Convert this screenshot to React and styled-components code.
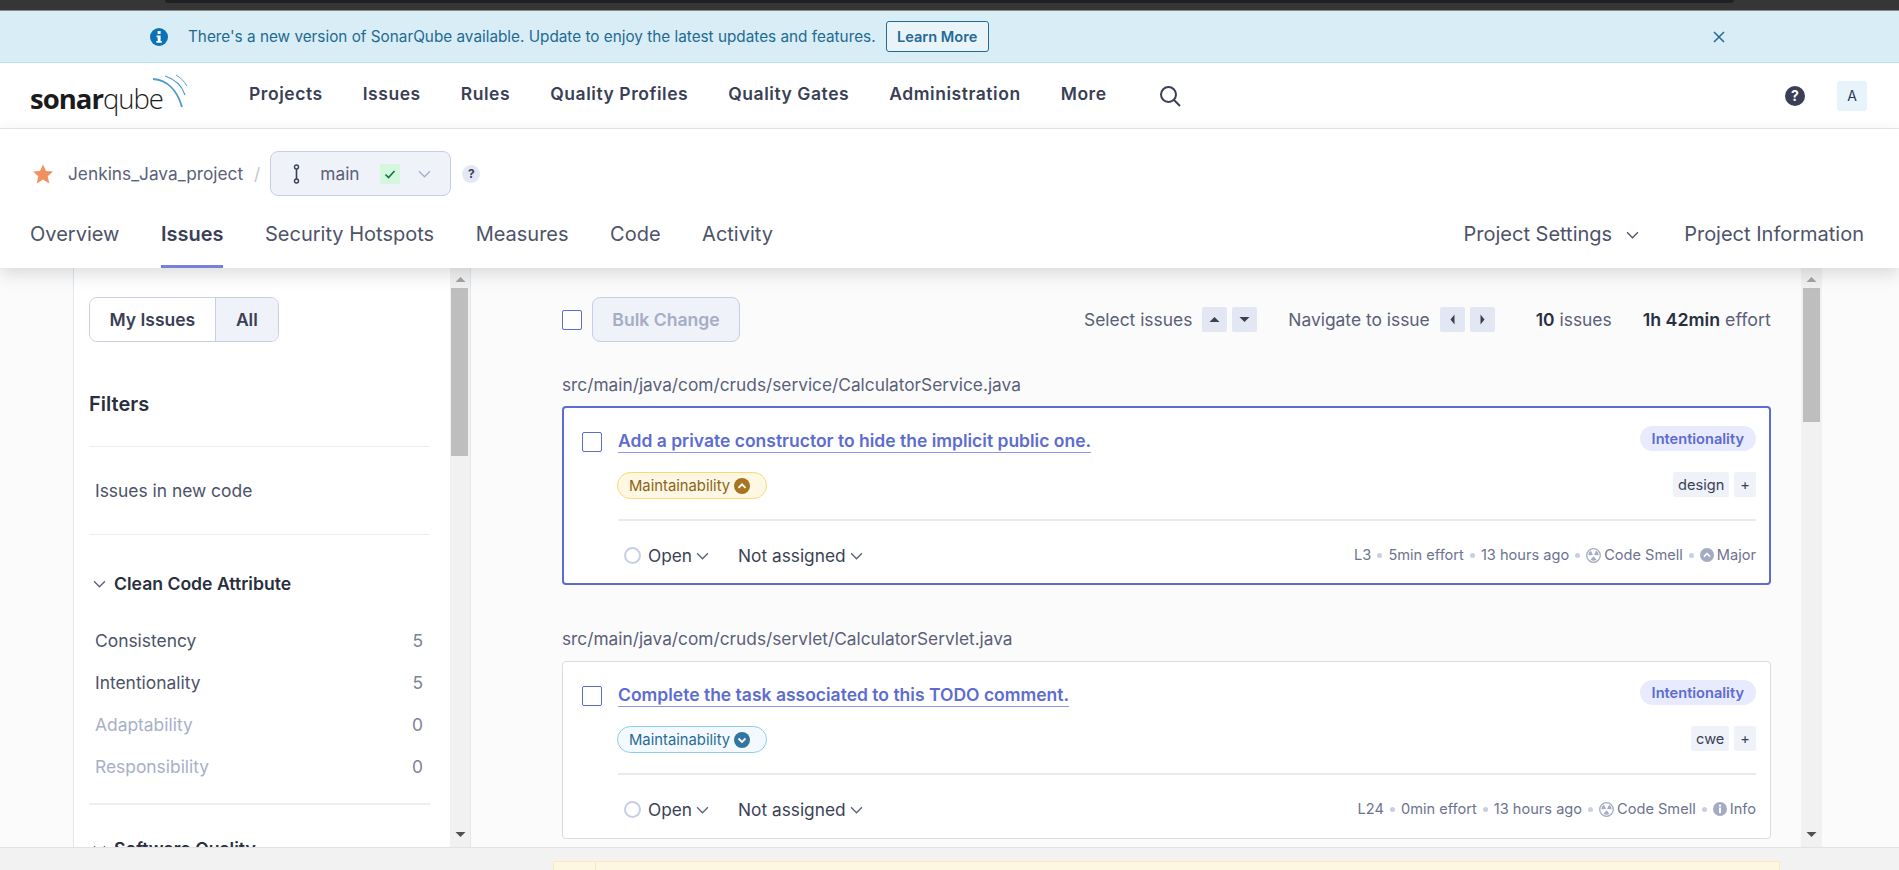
import styled, { createGlobalStyle } from "styled-components";

const Global = createGlobalStyle`
  html, body { margin: 0; padding: 0; background: #fff; }
  * { box-sizing: border-box; }
  body { font-family: Inter, "Noto Sans", sans-serif; color: #2a2f40; }
`;

const Page = styled.div`
  height: 870px;
  display: flex;
  flex-direction: column;
  overflow: hidden;
  position: relative;
`;

const Chrome = styled.div`
  height: 11px;
  background: #363636;
  border-bottom: 1px solid #8a8a8a;
  padding: 0 165px;
`;
const ChromeTab = styled.div`
  height: 3px;
  background: #202124;
  border-radius: 0 0 6px 6px;
`;

const Banner = styled.div`
  height: 52px;
  background: #d9edf7;
  border-bottom: 1px solid #b4e1f7;
  display: flex;
  align-items: center;
  padding-left: 150px;
  color: #1f6a91;
  font-size: 15.3px;
`;
const BannerText = styled.span`
  margin-left: 20px;
`;
const LearnMore = styled.button`
  margin-left: 10px;
  width: 103px;
  height: 31px;
  background: #e9f4f9;
  border: 1px solid #236a97;
  border-radius: 3px;
  color: #236a97;
  font: 600 14.6px Inter, sans-serif;
`;
const CloseBtn = styled.div`
  margin-left: 724px;
  display: flex;
`;

const Nav = styled.div`
  height: 66px;
  border-bottom: 1px solid #e8e8e8;
  display: flex;
  align-items: center;
  padding: 0 32px 0 30px;
  background: #fff;
`;
const Logo = styled.div`
  width: 219px;
  display: flex;
  align-items: flex-start;
  height: 44px;
`;
const LogoWord = styled.div`
  font-family: "Open Sans", sans-serif;
  font-size: 27.5px;
  letter-spacing: -1px;
  line-height: 38px;
  margin-top: 6px;
  color: #1b1b1d;
`;
const LogoBold = styled.span`
  font-weight: 700;
`;
const LogoLight = styled.span`
  font-weight: 300;
`;
const LogoWaves = styled.svg`
  margin-left: -11px;
  flex: none;
`;
const NavLink = styled.a`
  font-size: 17.5px;
  letter-spacing: 0.55px;
  font-weight: 600;
  color: #3a3f56;
  margin-right: 40px;
  margin-top: -4px;
`;
const NavRight = styled.div`
  margin-left: auto;
  display: flex;
  align-items: center;
  gap: 32px;
`;
const Avatar = styled.div`
  width: 30px;
  height: 30px;
  background: #e8f4fb;
  border-radius: 3px;
  display: flex;
  align-items: center;
  justify-content: center;
  font-size: 14px;
  color: #2b3a55;
`;

const ProjectBar = styled.div`
  height: 139px;
  background: #fff;
  box-shadow: 0 6px 16px rgba(40, 45, 60, 0.16);
  position: relative;
  z-index: 2;
  display: flex;
  flex-direction: column;
`;
const Crumbs = styled.div`
  height: 84px;
  padding: 5px 0 0 33px;
  display: flex;
  align-items: center;
  color: #5a6079;
  font-size: 17.3px;
`;
const CrumbName = styled.span`
  margin-left: 15px;
`;
const Slash = styled.span`
  margin: 0 10px 0 11px;
  color: #c2c6d4;
`;
const Branch = styled.div`
  width: 181px;
  height: 45px;
  background: #eff2f9;
  border: 1px solid #c8cfe4;
  border-radius: 8px;
  display: flex;
  align-items: center;
  padding-left: 21px;
  color: #5a6079;
`;
const BranchName = styled.span`
  margin-left: 18px;
  width: 60px;
`;
const PassBadge = styled.div`
  width: 20px;
  height: 20px;
  background: #d4f7de;
  display: flex;
  align-items: center;
  justify-content: center;
  margin-right: 18px;
`;
const HelpDot = styled.div`
  width: 18px;
  height: 18px;
  margin-left: 11px;
  border-radius: 50%;
  background: #e4e8f4;
  color: #3a3f56;
  font-size: 12px;
  font-weight: 700;
  display: flex;
  align-items: center;
  justify-content: center;
`;
const Tabs = styled.div`
  flex: 1;
  display: flex;
  padding: 0 35px 0 30px;
  align-items: stretch;
  font-size: 20px;
  color: #4d5369;
`;
const Tab = styled.a`
  margin-right: 41.5px;
  padding-top: 7px;
  height: 55px;
  line-height: 28px;
  font-weight: ${(p) => (p.$active ? 600 : 400)};
  color: ${(p) => (p.$active ? "#3a3f56" : "#4d5369")};
  border-bottom: 3px solid ${(p) => (p.$active ? "#7b80d6" : "transparent")};
`;
const TabRight = styled(Tab)`
  display: flex;
  align-items: flex-start;
  gap: 14px;
  margin-left: ${(p) => (p.$push ? "auto" : "0")};
  margin-right: ${(p) => (p.$last ? "0" : "45px")};
  svg {
    margin-top: 8px;
  }
`;

const Body = styled.div`
  flex: 1;
  min-height: 0;
  display: flex;
  padding-left: 73px;
  background: #fbfbfb;
`;
const Sidebar = styled.div`
  width: 398px;
  flex: none;
  display: flex;
  background: #fff;
  border-left: 1px solid #e3e6f1;
  border-right: 1px solid #e3e6f1;
`;
const SideContent = styled.div`
  flex: 1;
  min-width: 0;
  padding: 29px 20px 0 15px;
  overflow: hidden;
`;
const Toggle = styled.div`
  display: flex;
  width: 190px;
  height: 45px;
  border: 1px solid #c8cfe4;
  border-radius: 8px;
  overflow: hidden;
  font-size: 17.5px;
  font-weight: 600;
  color: #3a3f56;
`;
const ToggleItem = styled.div`
  display: flex;
  align-items: center;
  justify-content: center;
  width: ${(p) => p.$w}px;
  background: ${(p) => (p.$on ? "#eff2f9" : "#fff")};
  border-left: ${(p) => (p.$on ? "1px solid #c8cfe4" : "0")};
`;
const FiltersTitle = styled.div`
  height: 105px;
  display: flex;
  align-items: center;
  padding-top: 20px;
  font-size: 20px;
  font-weight: 600;
  color: #2a2f40;
  border-bottom: 1px solid #eceef3;
`;
const NewCode = styled.div`
  height: 88px;
  display: flex;
  align-items: center;
  padding-left: 6px;
  font-size: 17.4px;
  color: #4d5369;
  border-bottom: 1px solid #eceef3;
`;
const FacetHead = styled.div`
  display: flex;
  align-items: center;
  gap: 8px;
  height: 32px;
  padding-left: 4px;
  margin-top: ${(p) => p.$top}px;
  font-size: 17.6px;
  font-weight: 600;
  color: #2a2f40;
`;
const FacetList = styled.div`
  margin-top: 20px;
  padding-bottom: 16px;
  border-bottom: 2px solid #eceef3;
`;
const FacetRow = styled.div`
  height: 42px;
  display: flex;
  align-items: center;
  justify-content: space-between;
  padding: 0 7px 0 6px;
  font-size: 17.4px;
  color: ${(p) => (p.$off ? "#a9afc6" : "#4d5369")};
`;
const FacetCount = styled.span`
  color: #7d8296;
`;

const Track = styled.div`
  width: ${(p) => p.$w}px;
  flex: none;
  background: #f1f1f1;
  display: flex;
  flex-direction: column;
  align-items: center;
  justify-content: space-between;
  padding: 6px 0 7px;
`;
const Thumb = styled.div`
  position: absolute;
  left: ${(p) => p.$l}px;
  top: 20px;
  width: 17px;
  height: ${(p) => p.$h}px;
  background: #bebebe;
`;
const TrackWrap = styled.div`
  position: relative;
  display: flex;
`;

const Main = styled.div`
  flex: 1;
  min-width: 0;
  padding: 29px 30px 0 91px;
  overflow: hidden;
`;
const Toolbar = styled.div`
  height: 45px;
  display: flex;
  align-items: center;
  font-size: 17.4px;
  color: #5a6079;
`;
const Check = styled.div`
  width: 20px;
  height: 20px;
  margin-top: ${(p) => p.$top || 0}px;
  flex: none;
  background: #fff;
  border: 1px solid #5d6cd0;
  border-radius: 2px;
`;
const BulkBtn = styled.button`
  margin-left: 10px;
  width: 148px;
  height: 45px;
  background: #eff2f9;
  border: 1px solid #c8cfe4;
  border-radius: 8px;
  color: #a6adc4;
  font: 600 17.6px Inter, sans-serif;
`;
const ToolLabel = styled.span`
  margin-left: ${(p) => p.$ml}px;
  margin-right: ${(p) => p.$mr || 0}px;
`;
const Effort = styled(ToolLabel)`
  font-size: 17.8px;
`;
const Key = styled.div`
  width: 25px;
  height: 25px;
  margin-left: ${(p) => p.$ml || 0}px;
  background: #e2e7f3;
  border-radius: 2px;
  display: flex;
  align-items: center;
  justify-content: center;
`;
const Strong = styled.b`
  font-weight: 600;
  color: #2a2f40;
`;
const FilePath = styled.div`
  height: 23px;
  line-height: 23px;
  margin-top: ${(p) => p.$top}px;
  font-size: 17.3px;
  color: #5a6079;
`;
const Card = styled.div`
  height: ${(p) => (p.$selected ? 179 : 178)}px;
  margin-top: ${(p) => (p.$selected ? 10 : 11)}px;
  background: #fff;
  border: ${(p) => (p.$selected ? "2px solid #5d6cd0" : "1px solid #dcdcdc")};
  border-radius: 4px;
  padding: ${(p) => (p.$selected ? "19px 13px 0 18px" : "19px 14px 0 19px")};
  display: flex;
  gap: 16px;
`;
const CardBody = styled.div`
  flex: 1;
  min-width: 0;
`;
const CardTop = styled.div`
  display: flex;
  align-items: flex-start;
  justify-content: space-between;
  height: 45px;
`;
const IssueTitle = styled.a`
  margin-top: 2px;
  font-size: 17.5px;
  font-weight: 600;
  line-height: 23px;
  height: 24px;
  color: #5d6cd0;
  border-bottom: 1px solid #8f97e8;
`;
const Pill = styled.div`
  height: 25px;
  margin-top: -1px;
  padding: 0 12px;
  border-radius: 13px;
  background: #e8eafd;
  color: #5d6cd0;
  font-size: 14.6px;
  font-weight: 600;
  display: flex;
  align-items: center;
`;
const CardMid = styled.div`
  display: flex;
  justify-content: space-between;
  align-items: flex-start;
  height: 27px;
`;
const Chip = styled.div`
  width: 150px;
  height: 27px;
  margin-left: -1px;
  padding-left: 11px;
  display: flex;
  align-items: center;
  gap: 4px;
  border-radius: 14px;
  font-size: 14.8px;
  background: ${(p) => (p.$tone === "high" ? "#fef7e3" : "#f2faff")};
  border: 1px solid ${(p) => (p.$tone === "high" ? "#fbd96b" : "#8fcbee")};
  color: ${(p) => (p.$tone === "high" ? "#8b6316" : "#2b6a94")};
  white-space: nowrap;
`;
const Tags = styled.div`
  display: flex;
  gap: 5px;
`;
const Tag = styled.div`
  height: 25px;
  padding: 0 ${(p) => p.$pad || 5}px;
  background: #eff2f9;
  border-radius: 2px;
  font-size: 14.6px;
  color: #3a3f56;
  display: flex;
  align-items: center;
`;
const CardDivider = styled.div`
  height: 2px;
  background: #ebebeb;
  margin-top: 20px;
`;
const CardBottom = styled.div`
  display: flex;
  align-items: center;
  height: 68px;
  padding-left: 6px;
  font-size: 17.3px;
  color: #3a3f56;
`;
const StatusDot = styled.span`
  width: 17px;
  height: 17px;
  border: 2px solid #c8cfe4;
  border-radius: 50%;
  margin-right: 7px;
`;
const Dropdown = styled.span`
  display: flex;
  align-items: center;
  gap: 4px;
  margin-right: 29px;
`;
const Meta = styled.div`
  margin-left: auto;
  display: flex;
  align-items: center;
  font-size: 14.6px;
  color: #6d7390;
`;
const MetaSep = styled.span`
  width: 5px;
  height: 5px;
  margin: 0 6px;
  border-radius: 50%;
  background: #c8cfe4;
`;
const MetaIcon = styled.svg`
  margin-right: 3px;
`;
const MetaBall = styled.span`
  display: flex;
  margin-right: 3px;
`;

const RightGutter = styled.div`
  width: 77px;
  flex: none;
`;
const BottomBar = styled.div`
  height: 23px;
  flex: none;
  background: #f2f2f2;
  border-top: 1px solid #e2e2e2;
`;
const Toast = styled.div`
  position: absolute;
  left: 553px;
  top: 861px;
  width: 1227px;
  height: 30px;
  background: #fdf6e0;
  border: 1px solid #fbe9b8;
  padding-left: 41px;
`;
const ToastCell = styled.div`
  height: 100%;
  border-left: 1px solid #f5e6bd;
`;

const Chevron = ({ size = 13, color = "#5a6079" }) => (
  <svg width={size} height={size} viewBox="0 0 12 12" fill="none">
    <path d="M1 4l5 5 5-5" stroke={color} strokeWidth="1.2" />
  </svg>
);

const Arrow = ({ dir, color = "#3a3f56", size = 11 }) => {
  const pts = {
    up: "0.5,8 10.5,8 5.5,3",
    down: "0.5,3 10.5,3 5.5,8",
    left: "7.5,0.5 7.5,10.5 3.5,5.5",
    right: "3.5,0.5 3.5,10.5 7.5,5.5",
  };
  return (
    <svg width={size} height={size} viewBox="0 0 11 11">
      <polygon points={pts[dir]} fill={color} />
    </svg>
  );
};

const SeverityBall = ({ up, color, size = 16 }) => (
  <svg width={size} height={size} viewBox="0 0 16 16">
    <circle cx="8" cy="8" r="8" fill={color} />
    <path d={up ? "M4.5 9.8 8 6.3l3.5 3.5" : "M4.5 6.5 8 10l3.5-3.5"} fill="none" stroke="#fff" strokeWidth="1.8" />
  </svg>
);

const SmellIcon = () => (
  <MetaIcon width="15" height="15" viewBox="0 0 15 15">
    <circle cx="7.5" cy="7.5" r="6.8" fill="none" stroke="#a5abc3" strokeWidth="1.3" />
    <path d="M6.9 6.9 2.3 7.2a5.2 5.2 0 0 1 2.7-4.4ZM8.1 6.9l4.6.3a5.2 5.2 0 0 0-2.7-4.4ZM4.6 11.8a5.2 5.2 0 0 0 5.8 0L7.5 8.2Z" fill="#a5abc3" />
  </MetaIcon>
);

const InfoBall = () => (
  <MetaIcon width="14" height="14" viewBox="0 0 14 14">
    <circle cx="7" cy="7" r="7" fill="#a5abc3" />
    <rect x="6" y="2.6" width="2" height="2" fill="#fff" />
    <rect x="6" y="5.6" width="2" height="5.6" fill="#fff" />
  </MetaIcon>
);

const issues = [
  {
    path: "src/main/java/com/cruds/service/CalculatorService.java",
    top: 31,
    selected: true,
    title: "Add a private constructor to hide the implicit public one.",
    tone: "high",
    tag: "design",
    line: "L3",
    effort: "5min effort",
    severity: "Major",
  },
  {
    path: "src/main/java/com/cruds/servlet/CalculatorServlet.java",
    top: 42,
    title: "Complete the task associated to this TODO comment.",
    tone: "low",
    tag: "cwe",
    line: "L24",
    effort: "0min effort",
    severity: "Info",
  },
];

function IssueCard({ issue }) {
  const high = issue.tone === "high";
  return (
    <Card $selected={issue.selected}>
      <Check $top={5} />
      <CardBody>
        <CardTop>
          <IssueTitle>{issue.title}</IssueTitle>
          <Pill>Intentionality</Pill>
        </CardTop>
        <CardMid>
          <Chip $tone={issue.tone}>
            Maintainability
            <SeverityBall up={high} color={high ? "#a8741f" : "#34759f"} />
          </Chip>
          <Tags>
            <Tag>{issue.tag}</Tag>
            <Tag $pad={6}>+</Tag>
          </Tags>
        </CardMid>
        <CardDivider />
        <CardBottom>
          <StatusDot />
          <Dropdown>
            Open <Chevron />
          </Dropdown>
          <Dropdown>
            Not assigned <Chevron />
          </Dropdown>
          <Meta>
            {issue.line}
            <MetaSep />
            {issue.effort}
            <MetaSep />
            13 hours ago
            <MetaSep />
            <SmellIcon />
            Code Smell
            <MetaSep />
            {high ? (
              <MetaBall>
                <SeverityBall up color="#a5abc3" size={14} />
              </MetaBall>
            ) : (
              <InfoBall />
            )}
            {issue.severity}
          </Meta>
        </CardBottom>
      </CardBody>
    </Card>
  );
}

export default function App() {
  return (
    <Page>
      <Global />
      <Chrome>
        <ChromeTab />
      </Chrome>
      <Banner>
        <svg width="18" height="18" viewBox="0 0 18 18">
          <circle cx="9" cy="9" r="9" fill="#0b72b5" />
          <rect x="7.6" y="3" width="3" height="3" fill="#fff" />
          <path d="M6.6 7.4h4v5.6h1.2v1.8H6.4V13h1.3V9.2H6.6Z" fill="#fff" />
        </svg>
        <BannerText>There's a new version of SonarQube available. Update to enjoy the latest updates and features.</BannerText>
        <LearnMore>Learn More</LearnMore>
        <CloseBtn>
          <svg width="12" height="12" viewBox="0 0 12 12">
            <path d="M1 1l10 10M11 1 1 11" stroke="#236a97" strokeWidth="1.5" />
          </svg>
        </CloseBtn>
      </Banner>
      <Nav>
        <Logo>
          <LogoWord>
            <LogoBold>sonar</LogoBold>
            <LogoLight>qube</LogoLight>
          </LogoWord>
          <LogoWaves width="36" height="36" viewBox="0 0 36 36" fill="none">
            <path d="M1 5c13 1 24 10 29 28" stroke="#4e9bcd" strokeWidth="1.8" />
            <path d="M13 2c10 3 17 10 20 19" stroke="#4e9bcd" strokeWidth="1.2" />
            <path d="M24 1c5 3 8 6 11 11" stroke="#4e9bcd" strokeWidth="0.9" />
          </LogoWaves>
        </Logo>
        <NavLink>Projects</NavLink>
        <NavLink>Issues</NavLink>
        <NavLink>Rules</NavLink>
        <NavLink>Quality Profiles</NavLink>
        <NavLink>Quality Gates</NavLink>
        <NavLink>Administration</NavLink>
        <NavLink>More</NavLink>
        <svg width="22" height="22" viewBox="0 0 22 22" fill="none" style={{ marginLeft: 12 }}>
          <circle cx="9.5" cy="9.5" r="7.5" stroke="#3a3f56" strokeWidth="2" />
          <path d="M15 15l6 6" stroke="#3a3f56" strokeWidth="2" />
        </svg>
        <NavRight>
          <svg width="20" height="20" viewBox="0 0 20 20">
            <circle cx="10" cy="10" r="10" fill="#3a3f56" />
            <text x="10" y="15" textAnchor="middle" fontSize="14" fontWeight="700" fill="#fff" fontFamily="Inter">?</text>
          </svg>
          <Avatar>A</Avatar>
        </NavRight>
      </Nav>
      <ProjectBar>
        <Crumbs>
          <svg width="20" height="20" viewBox="0 0 20 20">
            <polygon points="10,0.5 13,7 20,7.6 14.7,12.2 16.3,19.5 10,15.6 3.7,19.5 5.3,12.2 0,7.6 7,7" fill="#f0905f" />
          </svg>
          <CrumbName>Jenkins_Java_project</CrumbName>
          <Slash>/</Slash>
          <Branch>
            <svg width="10" height="20" viewBox="0 0 10 20" fill="none">
              <circle cx="4.5" cy="3" r="2" stroke="#3a3f56" strokeWidth="1.4" />
              <circle cx="4.5" cy="17" r="2" stroke="#3a3f56" strokeWidth="1.4" />
              <path d="M4.5 5v10" stroke="#3a3f56" strokeWidth="1.6" />
            </svg>
            <BranchName>main</BranchName>
            <PassBadge>
              <svg width="12" height="12" viewBox="0 0 12 12" fill="none">
                <path d="M1.5 6.5 4.5 9.5 10.5 3" stroke="#0a7a3c" strokeWidth="1.6" />
              </svg>
            </PassBadge>
            <Chevron color="#a6adc4" />
          </Branch>
          <HelpDot>?</HelpDot>
        </Crumbs>
        <Tabs>
          <Tab>Overview</Tab>
          <Tab $active>Issues</Tab>
          <Tab>Security Hotspots</Tab>
          <Tab>Measures</Tab>
          <Tab>Code</Tab>
          <Tab>Activity</Tab>
          <TabRight $push>
            Project Settings <Chevron color="#4d5369" />
          </TabRight>
          <TabRight $last>Project Information</TabRight>
        </Tabs>
      </ProjectBar>
      <Body>
        <Sidebar>
          <SideContent>
            <Toggle>
              <ToggleItem $w={126}>My Issues</ToggleItem>
              <ToggleItem $w={64} $on>All</ToggleItem>
            </Toggle>
            <FiltersTitle>Filters</FiltersTitle>
            <NewCode>Issues in new code</NewCode>
            <FacetHead $top={32}>
              <Chevron />
              Clean Code Attribute
            </FacetHead>
            <FacetList>
              <FacetRow>Consistency<FacetCount>5</FacetCount></FacetRow>
              <FacetRow>Intentionality<FacetCount>5</FacetCount></FacetRow>
              <FacetRow $off>Adaptability<FacetCount>0</FacetCount></FacetRow>
              <FacetRow $off>Responsibility<FacetCount>0</FacetCount></FacetRow>
            </FacetList>
            <FacetHead $top={27}>
              <Chevron />
              Software Quality
            </FacetHead>
          </SideContent>
          <TrackWrap>
            <Track $w={20}>
              <Arrow dir="up" color="#a3a3a3" />
              <Arrow dir="down" color="#505050" />
            </Track>
            <Thumb $l={1} $h={168} />
          </TrackWrap>
        </Sidebar>
        <Main>
          <Toolbar>
            <Check />
            <BulkBtn>Bulk Change</BulkBtn>
            <ToolLabel $ml={344} $mr={10}>Select issues</ToolLabel>
            <Key><Arrow dir="up" /></Key>
            <Key $ml={5}><Arrow dir="down" /></Key>
            <ToolLabel $ml={31} $mr={10}>Navigate to issue</ToolLabel>
            <Key><Arrow dir="left" /></Key>
            <Key $ml={5}><Arrow dir="right" /></Key>
            <ToolLabel $ml={41}><Strong>10</Strong> issues</ToolLabel>
            <Effort $ml={31}><Strong>1h 42min</Strong> effort</Effort>
          </Toolbar>
          {issues.map((issue) => (
            <div key={issue.line}>
              <FilePath $top={issue.top}>{issue.path}</FilePath>
              <IssueCard issue={issue} />
            </div>
          ))}
        </Main>
        <TrackWrap>
          <Track $w={21}>
            <Arrow dir="up" color="#a3a3a3" />
            <Arrow dir="down" color="#505050" />
          </Track>
          <Thumb $l={2} $h={134} />
        </TrackWrap>
        <RightGutter />
      </Body>
      <BottomBar />
      <Toast>
        <ToastCell />
      </Toast>
    </Page>
  );
}
